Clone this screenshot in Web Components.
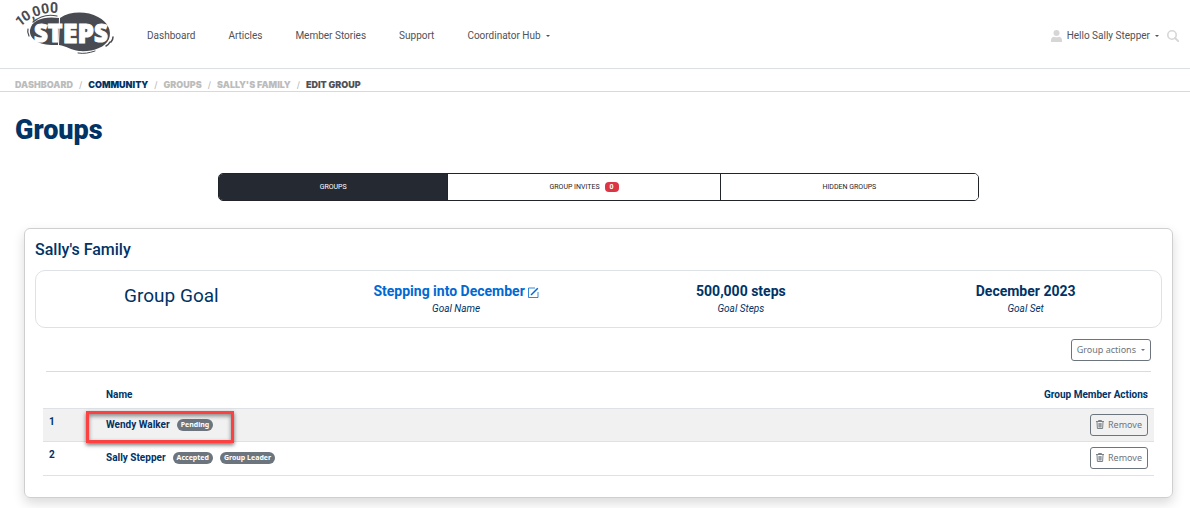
<!DOCTYPE html>
<html lang="en">
<head>
<meta charset="utf-8">
<meta name="viewport" content="width=device-width, initial-scale=1">
<title>Groups - 10,000 Steps</title>
<style>
:root{--navy:#003366;--ink:#212529;--slate:#6c757d;--line:#dee2e6;--link:#0069d2}
body{margin:0;background:#fff;color:var(--navy);font:10px/16px Roboto,"Liberation Sans",sans-serif}
main{padding:0 17px 10px 24px}
</style>
</head>
<body>
<site-header>
  <nav-link>Dashboard</nav-link>
  <nav-link>Articles</nav-link>
  <nav-link>Member Stories</nav-link>
  <nav-link>Support</nav-link>
  <nav-link menu>Coordinator Hub</nav-link>
  <user-menu slot="user">Hello Sally Stepper</user-menu>
</site-header>
<bread-crumbs></bread-crumbs>
<page-title>Groups</page-title>
<main>
  <group-tabs></group-tabs>
  <group-card>
    <span slot="title">Sally's Family</span>
    <goal-panel slot="goal">
      <goal-item editable label="Goal Name">Stepping into December</goal-item>
      <goal-item label="Goal Steps">500,000 steps</goal-item>
      <goal-item label="Goal Set">December 2023</goal-item>
    </goal-panel>
    <action-button slot="actions" menu>Group actions</action-button>
    <member-table></member-table>
  </group-card>
</main>
<script>
function define(name, render) {
  customElements.define(name, class extends HTMLElement {
    constructor() {
      super();
      this.attachShadow({ mode: 'open' });
    }
    connectedCallback() {
      const t = document.createElement('template');
      t.innerHTML = render(this);
      this.shadowRoot.replaceChildren(t.content.cloneNode(true));
    }
  });
}
const caret = '<svg class="caret" width="4" height="2" viewBox="0 0 4 2" aria-hidden="true"><path d="M0 0h4L2 2z" fill="currentColor"/></svg>';

define('steps-logo', () => `
<style>
:host{display:block;width:100px;height:56px}
svg{display:block;overflow:visible}
text{font-family:"Open Sans","Noto Sans",sans-serif;font-weight:800}
.count{font-family:Roboto,sans-serif;font-weight:700}
</style>
<svg width="100" height="56" viewBox="15 0 100 56" role="img" aria-label="10,000 Steps">
  <g fill="#484b52">
    <path d="M59 18C45 16 32 19 30 30c-1 10 10 16 28 15z"/>
    <path d="M60 18c10-7 27-7 38-1 10 5 14 14 11 22-4 9-17 13-30 12-8-1-13-5-20-6z"/>
    <g class="count" font-size="14">
      <text class="count" x="20" y="27" transform="rotate(-38 20 27)">1</text>
      <text class="count" x="25" y="22" transform="rotate(-32 25 22)">0</text>
      <text class="count" x="32" y="19" transform="rotate(-24 32 19)">,</text>
      <text class="count" x="34" y="17" transform="rotate(-18 34 17)">0</text>
      <text class="count" x="42" y="14" transform="rotate(-10 42 14)">0</text>
      <text class="count" x="50" y="13">0</text>
    </g>
  </g>
  <g fill="none" stroke="#484b52" stroke-linecap="round">
    <path d="M33 22c7-6 15-8 24-6" stroke-width="1.2"/>
    <path d="M28 29c-1 3 0 5 1 7" stroke-width="1.2"/>
    <path d="M110 42c-1 2-2 3-4 4M113 37c0 2 0 3-2 5" stroke-width="1.5"/>
    <path d="M78 53c6 1 11 0 17-2" stroke-width="1"/>
  </g>
  <text x="34" y="42" fill="#fff" stroke="#fff" stroke-width="1" font-size="24">S<tspan font-size="25">T</tspan><tspan font-size="27" dy="1">E</tspan><tspan font-size="26">P</tspan><tspan font-size="24" dy="-1">S</tspan></text>
</svg>`);

define('site-header', () => `
<style>
:host{display:block;border-bottom:1px solid #dcdfe3}
header{display:flex;align-items:center;height:68px;padding:0 11px 0 15px}
a.logo{align-self:flex-start}
nav{display:flex;gap:33px;margin-left:32px;padding-top:3px}
.user{display:flex;margin-left:auto;padding-top:3px}
</style>
<header>
  <a class="logo" href="#" aria-label="Home"><steps-logo></steps-logo></a>
  <nav><slot></slot></nav>
  <div class="user"><slot name="user"></slot></div>
</header>`);

define('nav-link', el => `
<style>
:host{display:block}
a{display:flex;align-items:center;gap:5px;color:#4f5256;text-decoration:none;white-space:nowrap}
</style>
<a href="#"><slot></slot>${el.hasAttribute('menu') ? caret : ''}</a>`);

define('user-menu', () => `
<style>
:host{display:flex;align-items:center;gap:8px}
a{display:flex;align-items:center;gap:5px;color:#4f5256;text-decoration:none;white-space:nowrap}
button{display:block;border:0;padding:0;background:none;line-height:0}
</style>
<a href="#">
  <svg width="11" height="12" viewBox="0 0 11 12" fill="#d6d6d6" aria-hidden="true"><circle cx="5.500" cy="3" r="3"/><path d="M0 12V10c0-2 1.500-3 3-3.300 1.500.8 3.500.8 5 0 1.500.3 3 1.300 3 3.300v2z"/></svg>
  <slot></slot>${caret}
</a>
<button aria-label="Search"><svg width="12" height="12" viewBox="0 0 12 12" fill="none" stroke="#d6d6d6"><circle cx="5" cy="5" r="4.200" stroke-width="1.600"/><path d="M8 8l3.200 3.200" stroke-width="1.900" stroke-linecap="round"/></svg></button>`);

define('bread-crumbs', () => `
<style>
:host{display:block;border-bottom:1px solid #d9d9d9}
ol{display:flex;margin:0;padding:10px 15px 0;list-style:none;font:900 9px/12px Inter,"Liberation Sans",sans-serif;text-transform:uppercase}
li+li::before{content:"/";padding:0 6px;color:#b5b5b5;font-weight:400}
a{color:#bcbcbc;text-decoration:none}
.section{color:var(--navy)}
[aria-current]{color:#4f5256}
</style>
<nav aria-label="Breadcrumb"><ol>
  <li><a href="#">Dashboard</a></li><li><a class="section" href="#">Community</a></li><li><a href="#">Groups</a></li><li><a href="#">Sally's Family</a></li><li><span aria-current="page">Edit Group</span></li>
</ol></nav>`);

define('page-title', () => `
<style>
:host{display:block;padding:22px 15px 27px}
h1{margin:0;font-size:27px;line-height:32px;font-weight:900}
</style>
<h1><slot></slot></h1>`);

define('group-tabs', () => `
<style>
:host{display:flex;width:66.2%;margin:0 auto 27px;box-sizing:border-box;border:1px solid var(--ink);border-radius:5px;overflow:hidden}
button{flex:258 1 0;height:26px;display:flex;align-items:center;justify-content:center;gap:5px;padding:0;border:0;background:#fff;color:var(--ink);font:7px/10px Roboto,sans-serif;text-transform:uppercase}
button+button{border-left:1px solid var(--ink)}
.invites{flex-grow:273}
[aria-pressed=true]{flex-grow:229;background:#242932;color:#fff}
.count{min-width:14px;border-radius:4px;background:#dc3545;color:#fff;font-weight:700}
</style>
<button aria-pressed="true">Groups</button>
<button class="invites">Group Invites <span class="count">0</span></button>
<button>Hidden Groups</button>`);

define('group-card', () => `
<style>
:host{display:block;padding:10px 10px 21px;border:1px solid #cfcfcf;border-radius:6px;box-shadow:0 5px 12px rgba(0,0,0,.15)}
h2{margin:0 0 10px;font-size:16px;line-height:21px;font-weight:500}
.actions{display:flex;justify-content:flex-end;margin:11px 11px 10px}
hr{margin:0 11px 9px;border:0;border-top:1px solid #d9dbde}
</style>
<h2><slot name="title"></slot></h2>
<slot name="goal"></slot>
<div class="actions"><slot name="actions"></slot></div>
<hr>
<slot></slot>`);

define('goal-panel', () => `
<style>
:host{display:block;border:1px solid var(--line);border-radius:10px}
.row{display:grid;grid-template-columns:repeat(4,1fr);height:56px;margin:0 -7px}
h3{margin:14px 0 0;text-align:center;font-size:19px;line-height:22px;font-weight:400}
</style>
<div class="row"><h3>Group Goal</h3><slot></slot></div>`);

define('goal-item', el => `
<style>
:host{display:block;padding-top:11px;text-align:center}
.value{display:flex;justify-content:center;align-items:center;gap:3px;font-size:14px;line-height:18px;font-weight:700}
.edit{color:var(--link);text-decoration:none}
.label{font-size:10px;line-height:17px;font-style:italic}
svg{margin-top:3px}
</style>
${el.hasAttribute('editable')
  ? '<a class="value edit" href="#"><slot></slot><svg width="11" height="11" viewBox="0 0 11 11" fill="none" stroke="currentColor" aria-hidden="true"><path d="M7 1H.5v9.500H10V5" stroke-width=".8"/><path d="M3 8L9.800 1.200" stroke-width="1.500"/></svg></a>'
  : '<div class="value"><slot></slot></div>'}
<div class="label">${el.getAttribute('label')}</div>`);

define('action-button', el => `
<style>
:host{display:inline-block;vertical-align:top}
button{display:flex;align-items:center;gap:4px;height:22px;padding:0 5px;border:1px solid var(--slate);border-radius:3px;background:transparent;color:var(--slate);font:9px/14px "Noto Sans",sans-serif;white-space:nowrap}
svg.caret{margin-left:1px}
</style>
<button>${el.hasAttribute('trash') ? '<svg width="8" height="9" viewBox="0 0 8 9" fill="none" stroke="currentColor" stroke-width=".9" aria-hidden="true"><path d="M0 1.500h8M2.500 1.300V.500h3v.8M1 2l.4 6.500h5.200L7 2M3 3v4.500M4 3v4.500M5 3v4.500"/></svg>' : ''}<slot></slot>${el.hasAttribute('menu') ? caret : ''}</button>`);

define('status-badge', () => `
<style>
:host{display:inline-block;padding:0 4px;border-radius:6px;background:var(--slate);color:#fff;font:700 7px/12px "Noto Sans",sans-serif}
</style><slot></slot>`);

define('member-table', () => `
<style>
:host{display:block;margin:0 8px}
table{width:100%;border-collapse:collapse;text-align:left;font-weight:700;font-size:10px;line-height:16px}
th,td{box-sizing:border-box;padding:5px 6px;border-bottom:1px solid var(--line);vertical-align:top}
th{height:27px;padding:6px 6px 4px}
td{height:33px}
tr:last-child td{height:34px}
.num{width:57px}
.action{text-align:right}
.shade{background:#f1f1f1}
.who{display:inline-flex;align-items:center;gap:7px;margin-top:3px}
.wrap{position:relative}
.mark{position:absolute;left:-14px;top:2px;width:142px;height:26px;border:3px solid #fb4141;box-shadow:0 2px 4px rgba(0,0,0,.55),inset 0 2px 4px rgba(0,0,0,.45);pointer-events:none}
</style>
<table>
  <thead><tr><th class="num"></th><th scope="col">Name</th><th class="action" scope="col">Group Member Actions</th></tr></thead>
  <tbody>
    <tr class="shade"><td class="num">1</td><td class="wrap"><span class="who">Wendy Walker <status-badge>Pending</status-badge></span><span class="mark"></span></td><td class="action"><action-button trash>Remove</action-button></td></tr>
    <tr><td class="num">2</td><td><span class="who">Sally Stepper <status-badge>Accepted</status-badge><status-badge>Group Leader</status-badge></span></td><td class="action"><action-button trash>Remove</action-button></td></tr>
  </tbody>
</table>`);
</script>
</body>
</html>
